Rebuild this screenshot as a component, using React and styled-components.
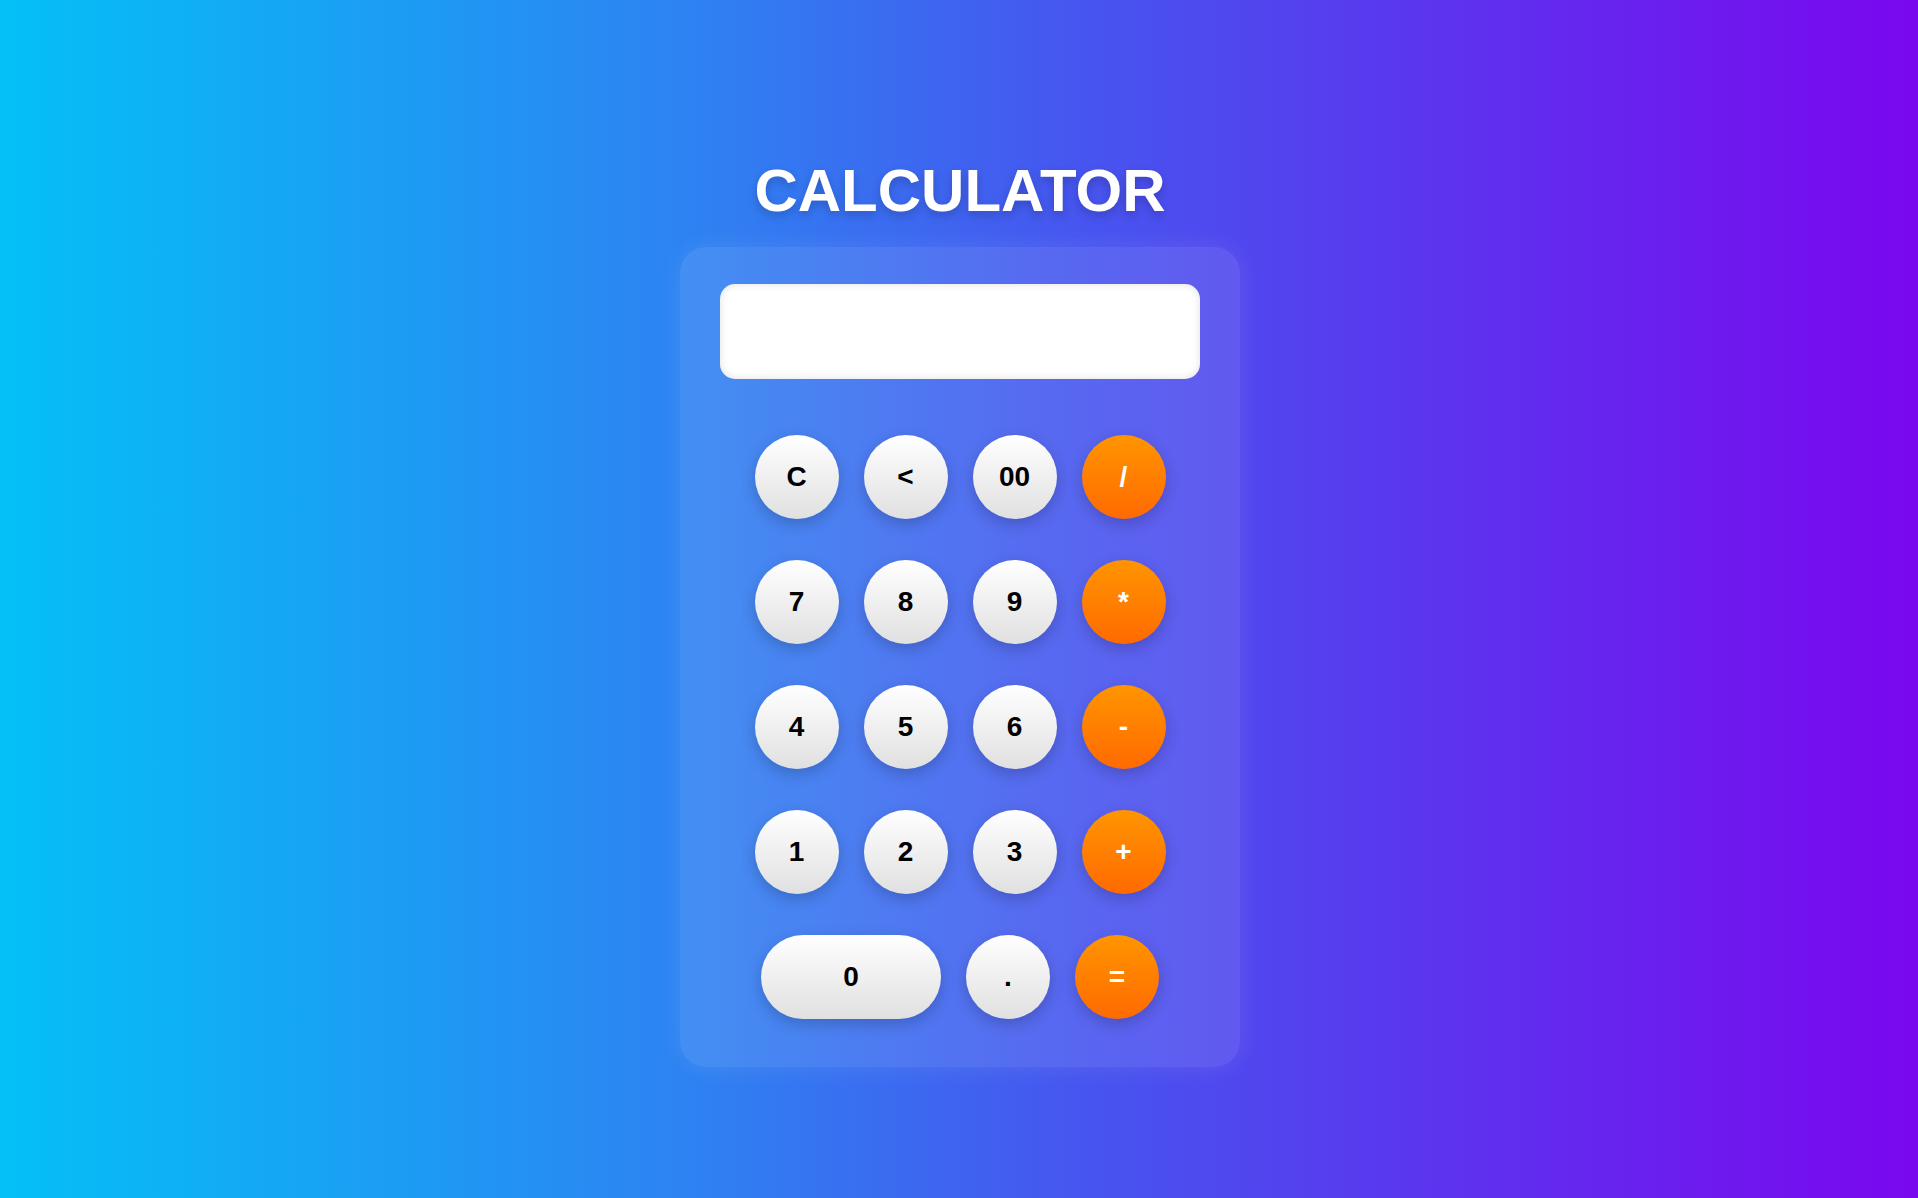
import styled, { createGlobalStyle } from "styled-components";

const GlobalStyle = createGlobalStyle`
  * { box-sizing: border-box; }
  body {
    margin: 0;
    font-family: "Liberation Sans", Arial, sans-serif;
  }
`;

const rows = [
  ["C", "<", "00", "/"],
  ["7", "8", "9", "*"],
  ["4", "5", "6", "-"],
  ["1", "2", "3", "+"],
];

const isOperator = (key) => ["/", "*", "-", "+", "="].includes(key);

const App = () => {
  return (
    <Page>
      <GlobalStyle />
      <Title>CALCULATOR</Title>
      <Card>
        <Display />
        <Keypad>
          {rows.map((row, i) => (
            <Row key={i}>
              {row.map((key) => (
                <Key key={key} operator={isOperator(key)}>{key}</Key>
              ))}
            </Row>
          ))}
          <Row>
            <Key wide>0</Key>
            <Key>.</Key>
            <Key operator>=</Key>
          </Row>
        </Keypad>
      </Card>
    </Page>
  );
};

export default App;

const Page = styled.div`
  min-height: 100vh;
  display: flex;
  flex-direction: column;
  align-items: center;
  padding: 156px 0 0 2px;
  background: linear-gradient(
    to right,
    #04c0f6 0%,
    #2e82f2 36%,
    #4656ef 56%,
    #7a07ee 100%
  );
`;

const Title = styled.h1`
  margin: 0 0 22px;
  font-size: 60px;
  font-weight: 700;
  line-height: 69px;
  color: #fff;
  text-shadow: 0 4px 10px rgba(0, 0, 0, 0.2);
`;

const Card = styled.div`
  width: 560px;
  padding: 37px 40px 48px;
  border-radius: 26px;
  background: rgba(255, 255, 255, 0.1);
  box-shadow: 0 0 24px rgba(255, 255, 255, 0.1);
`;

const Display = styled.div`
  height: 95px;
  border-radius: 15px;
  background: #fff;
  box-shadow: inset 0 0 8px rgba(0, 0, 0, 0.12);
`;

const Keypad = styled.div`
  display: flex;
  flex-direction: column;
  gap: 41px;
  margin-top: 56px;
`;

const Row = styled.div`
  display: flex;
  justify-content: center;
  gap: 25px;
`;

const Key = styled.button`
  width: ${(p) => (p.wide ? "180px" : "84px")};
  height: 84px;
  border: none;
  border-radius: 42px;
  padding: 0;
  font-family: "Liberation Sans", Arial, sans-serif;
  font-size: 28px;
  font-weight: 700;
  cursor: pointer;
  color: ${(p) => (p.operator ? "#fff" : "#000")};
  background: ${(p) =>
    p.operator
      ? "linear-gradient(to bottom, #ff9500, #ff6a00)"
      : "linear-gradient(to bottom, #ffffff, #e0e0e0)"};
  box-shadow: 0 5px 15px rgba(0, 0, 0, 0.2);
`;
